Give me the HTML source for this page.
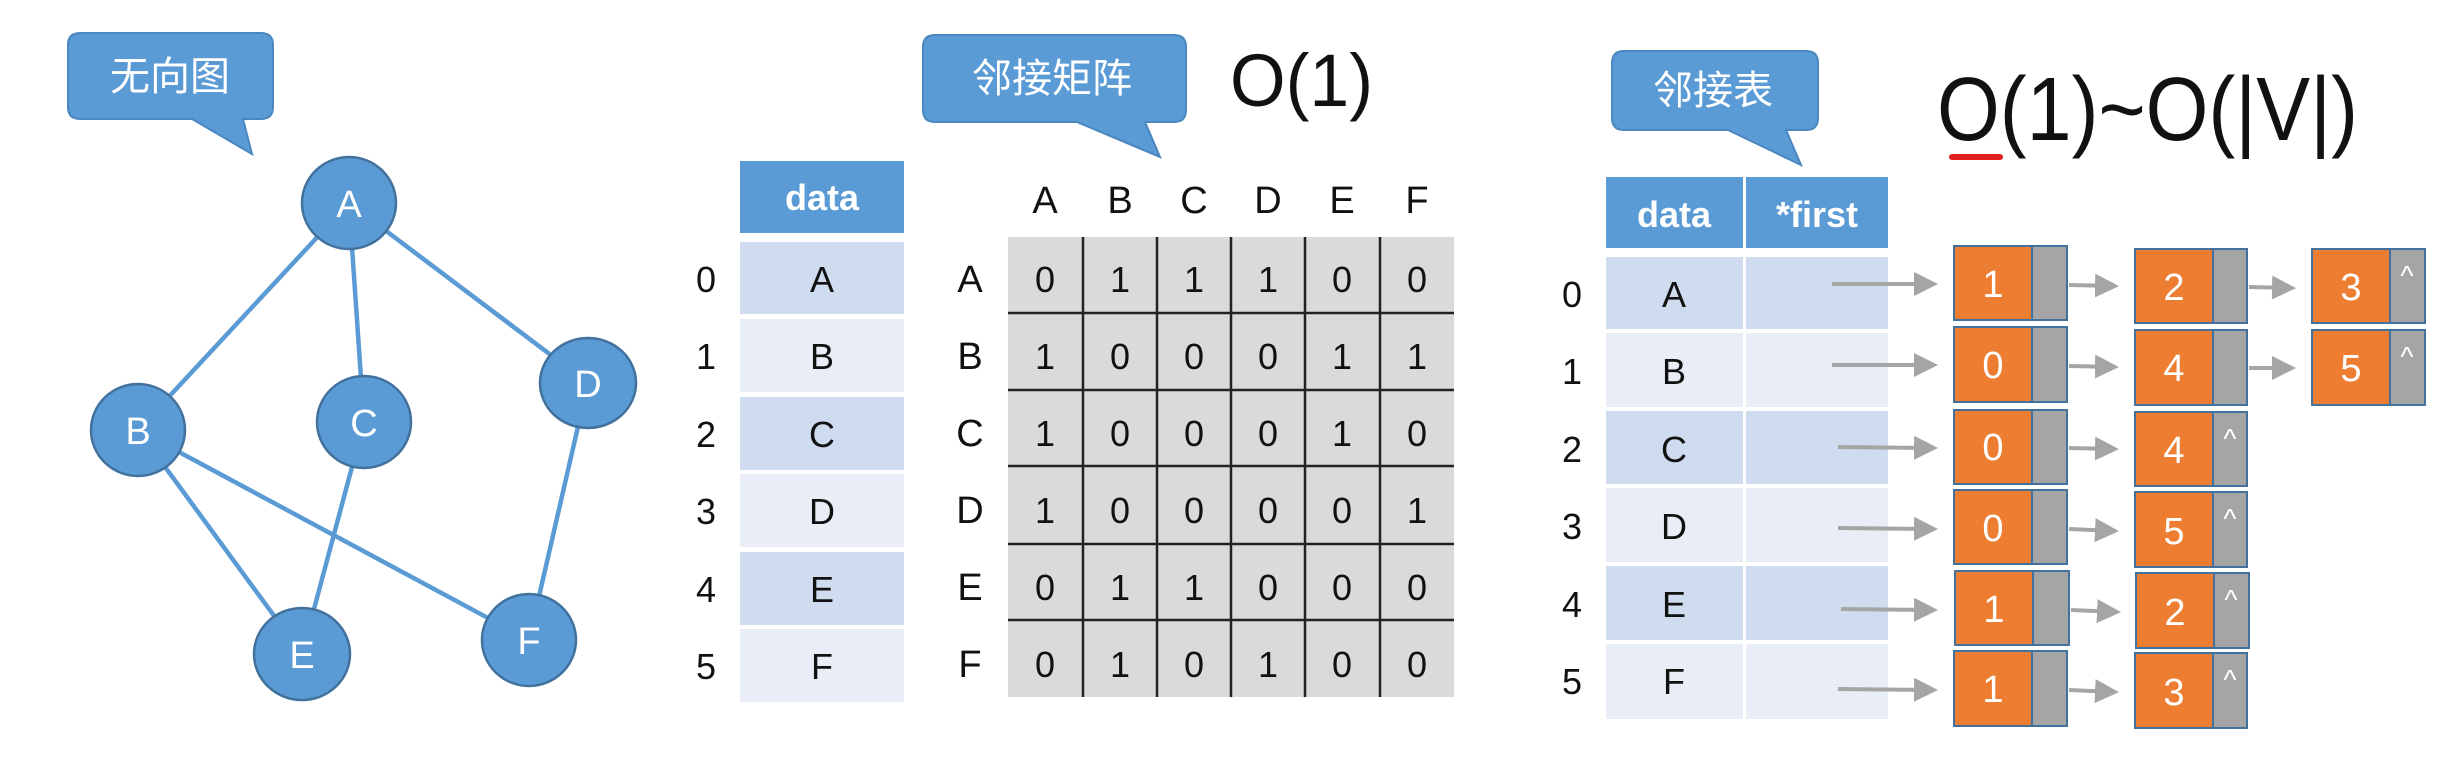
<!DOCTYPE html>
<html><head><meta charset="utf-8"><style>
html,body{margin:0;padding:0;background:#fff;}
svg{display:block;}
text{font-family:"Liberation Sans","Noto Sans CJK SC",sans-serif;}
</style></head><body>
<svg width="2452" height="772" viewBox="0 0 2452 772" xmlns="http://www.w3.org/2000/svg">
<defs>
<marker id="ah" markerWidth="6" markerHeight="6" refX="5" refY="3" orient="auto" markerUnits="strokeWidth"><path d="M0,0 L6,3 L0,6 z" fill="#a5a5a5"/></marker>
</defs>
<path d="M80,33 H261 Q273,33 273,45 V107 Q273,119 261,119 H243 L252,154 L192,119 H80 Q68,119 68,107 V45 Q68,33 80,33 Z" fill="#5b9bd5" stroke="#4a86c0" stroke-width="2"/>
<text x="170" y="90" font-size="40" fill="#fff" text-anchor="middle">无向图</text>
<g stroke="#5b9bd5" stroke-width="4.5">
<line x1="349" y1="203" x2="138" y2="430"/>
<line x1="349" y1="203" x2="364" y2="422"/>
<line x1="349" y1="203" x2="588" y2="383"/>
<line x1="138" y1="430" x2="302" y2="654"/>
<line x1="138" y1="430" x2="529" y2="640"/>
<line x1="364" y1="422" x2="302" y2="654"/>
<line x1="588" y1="383" x2="529" y2="640"/>
</g>
<g fill="#5b9bd5" stroke="#41719c" stroke-width="2.5">
<ellipse cx="349" cy="203" rx="47" ry="46"/>
<ellipse cx="138" cy="430" rx="47" ry="46"/>
<ellipse cx="364" cy="422" rx="47" ry="46"/>
<ellipse cx="588" cy="383" rx="48" ry="45"/>
<ellipse cx="302" cy="654" rx="48" ry="46"/>
<ellipse cx="529" cy="640" rx="47" ry="46"/>
</g>
<g fill="#fff" font-size="38" text-anchor="middle">
<text x="349" y="217">A</text><text x="138" y="444">B</text><text x="364" y="436">C</text>
<text x="588" y="397">D</text><text x="302" y="668">E</text><text x="529" y="654">F</text>
</g>
<path d="M935,35 H1174 Q1186,35 1186,47 V110 Q1186,122 1174,122 H1145 L1160,157 L1077,122 H935 Q923,122 923,110 V47 Q923,35 935,35 Z" fill="#5b9bd5" stroke="#4a86c0" stroke-width="2"/>
<text x="1052" y="92" font-size="40" fill="#fff" text-anchor="middle">邻接矩阵</text>
<text x="1230" y="106" font-size="74" fill="#111" textLength="143" lengthAdjust="spacingAndGlyphs">O(1)</text>
<rect x="740" y="161" width="164" height="72" fill="#5b9bd5"/>
<text x="822" y="210" font-size="36" font-weight="bold" fill="#fff" text-anchor="middle">data</text>
<g>
<rect x="740" y="242" width="164" height="72" fill="#cfdbee"/>
<rect x="740" y="319" width="164" height="73" fill="#e9edf6"/>
<rect x="740" y="397" width="164" height="73" fill="#cfdbee"/>
<rect x="740" y="474" width="164" height="73" fill="#e9edf6"/>
<rect x="740" y="552" width="164" height="73" fill="#cfdbee"/>
<rect x="740" y="629" width="164" height="73" fill="#e9edf6"/>
</g>
<g font-size="36" fill="#111" text-anchor="middle">
<text x="706" y="292">0</text><text x="822" y="292">A</text>
<text x="706" y="369">1</text><text x="822" y="369">B</text>
<text x="706" y="447">2</text><text x="822" y="447">C</text>
<text x="706" y="524">3</text><text x="822" y="524">D</text>
<text x="706" y="602">4</text><text x="822" y="602">E</text>
<text x="706" y="679">5</text><text x="822" y="679">F</text>
</g>
<rect x="1008" y="237" width="446" height="460" fill="#dadada"/>
<g stroke="#222" stroke-width="2.5">
<line x1="1083" y1="237" x2="1083" y2="697"/><line x1="1157" y1="237" x2="1157" y2="697"/>
<line x1="1231" y1="237" x2="1231" y2="697"/><line x1="1305" y1="237" x2="1305" y2="697"/>
<line x1="1380" y1="237" x2="1380" y2="697"/>
<line x1="1008" y1="313" x2="1454" y2="313"/><line x1="1008" y1="390" x2="1454" y2="390"/>
<line x1="1008" y1="466" x2="1454" y2="466"/><line x1="1008" y1="544" x2="1454" y2="544"/>
<line x1="1008" y1="620" x2="1454" y2="620"/>
</g>
<g font-size="38" fill="#111" text-anchor="middle">
<text x="1045" y="213">A</text><text x="1120" y="213">B</text><text x="1194" y="213">C</text><text x="1268" y="213">D</text><text x="1342" y="213">E</text><text x="1417" y="213">F</text>
<text x="970" y="292">A</text><text x="970" y="369">B</text><text x="970" y="446">C</text><text x="970" y="523">D</text><text x="970" y="600">E</text><text x="970" y="677">F</text>
</g>
<g font-size="36" fill="#111" text-anchor="middle">
<text y="292"><tspan x="1045">0</tspan><tspan x="1120">1</tspan><tspan x="1194">1</tspan><tspan x="1268">1</tspan><tspan x="1342">0</tspan><tspan x="1417">0</tspan></text>
<text y="369"><tspan x="1045">1</tspan><tspan x="1120">0</tspan><tspan x="1194">0</tspan><tspan x="1268">0</tspan><tspan x="1342">1</tspan><tspan x="1417">1</tspan></text>
<text y="446"><tspan x="1045">1</tspan><tspan x="1120">0</tspan><tspan x="1194">0</tspan><tspan x="1268">0</tspan><tspan x="1342">1</tspan><tspan x="1417">0</tspan></text>
<text y="523"><tspan x="1045">1</tspan><tspan x="1120">0</tspan><tspan x="1194">0</tspan><tspan x="1268">0</tspan><tspan x="1342">0</tspan><tspan x="1417">1</tspan></text>
<text y="600"><tspan x="1045">0</tspan><tspan x="1120">1</tspan><tspan x="1194">1</tspan><tspan x="1268">0</tspan><tspan x="1342">0</tspan><tspan x="1417">0</tspan></text>
<text y="677"><tspan x="1045">0</tspan><tspan x="1120">1</tspan><tspan x="1194">0</tspan><tspan x="1268">1</tspan><tspan x="1342">0</tspan><tspan x="1417">0</tspan></text>
</g>
<path d="M1624,51 H1806 Q1818,51 1818,63 V118 Q1818,130 1806,130 H1786 L1801,165 L1728,130 H1624 Q1612,130 1612,118 V63 Q1612,51 1624,51 Z" fill="#5b9bd5" stroke="#4a86c0" stroke-width="2"/>
<text x="1713" y="104" font-size="40" fill="#fff" text-anchor="middle">邻接表</text>
<text x="1937" y="140" font-size="90" fill="#111" textLength="421" lengthAdjust="spacingAndGlyphs">O(1)~O(|V|)</text>
<path d="M1952,157 H2000" stroke="#e02020" stroke-width="6" stroke-linecap="round"/>
<rect x="1606" y="177" width="137" height="71" fill="#5b9bd5"/>
<rect x="1746" y="177" width="142" height="71" fill="#5b9bd5"/>
<text x="1674" y="227" font-size="36" font-weight="bold" fill="#fff" text-anchor="middle">data</text>
<text x="1817" y="227" font-size="36" font-weight="bold" fill="#fff" text-anchor="middle">*first</text>
<g>
<rect x="1606" y="257" width="137" height="72" fill="#cfdbee"/><rect x="1746" y="257" width="142" height="72" fill="#cfdbee"/>
<rect x="1606" y="333" width="137" height="74" fill="#e9edf6"/><rect x="1746" y="333" width="142" height="74" fill="#e9edf6"/>
<rect x="1606" y="411" width="137" height="73" fill="#cfdbee"/><rect x="1746" y="411" width="142" height="73" fill="#cfdbee"/>
<rect x="1606" y="488" width="137" height="74" fill="#e9edf6"/><rect x="1746" y="488" width="142" height="74" fill="#e9edf6"/>
<rect x="1606" y="566" width="137" height="74" fill="#cfdbee"/><rect x="1746" y="566" width="142" height="74" fill="#cfdbee"/>
<rect x="1606" y="644" width="137" height="75" fill="#e9edf6"/><rect x="1746" y="644" width="142" height="75" fill="#e9edf6"/>
</g>
<g font-size="36" fill="#111" text-anchor="middle">
<text x="1572" y="307">0</text><text x="1674" y="307">A</text>
<text x="1572" y="384">1</text><text x="1674" y="384">B</text>
<text x="1572" y="462">2</text><text x="1674" y="462">C</text>
<text x="1572" y="539">3</text><text x="1674" y="539">D</text>
<text x="1572" y="617">4</text><text x="1674" y="617">E</text>
<text x="1572" y="694">5</text><text x="1674" y="694">F</text>
</g>
<g stroke="#a5a5a5" stroke-width="4" marker-end="url(#ah)" fill="none">
<line x1="1832" y1="284" x2="1934" y2="284"/><line x1="2069" y1="285" x2="2115" y2="286"/><line x1="2249" y1="287" x2="2292" y2="288"/>
<line x1="1832" y1="365" x2="1934" y2="365"/><line x1="2069" y1="366" x2="2115" y2="367"/><line x1="2249" y1="368" x2="2292" y2="368"/>
<line x1="1838" y1="447" x2="1934" y2="448"/><line x1="2069" y1="448" x2="2115" y2="449"/>
<line x1="1838" y1="528" x2="1934" y2="529"/><line x1="2069" y1="529" x2="2115" y2="531"/>
<line x1="1841" y1="609" x2="1934" y2="610"/><line x1="2071" y1="610" x2="2117" y2="612"/>
<line x1="1838" y1="689" x2="1934" y2="690"/><line x1="2069" y1="690" x2="2115" y2="692"/>
</g>
<g stroke="#41719c" stroke-width="2">
<rect x="1954" y="246" width="78" height="74" fill="#ed7d31"/><rect x="2032" y="246" width="35" height="74" fill="#a5a5a5"/>
<rect x="2135" y="249" width="78" height="74" fill="#ed7d31"/><rect x="2213" y="249" width="34" height="74" fill="#a5a5a5"/>
<rect x="2312" y="249" width="78" height="74" fill="#ed7d31"/><rect x="2390" y="249" width="35" height="74" fill="#a5a5a5"/>
<rect x="1954" y="327" width="78" height="75" fill="#ed7d31"/><rect x="2032" y="327" width="35" height="75" fill="#a5a5a5"/>
<rect x="2135" y="330" width="78" height="75" fill="#ed7d31"/><rect x="2213" y="330" width="34" height="75" fill="#a5a5a5"/>
<rect x="2312" y="330" width="78" height="75" fill="#ed7d31"/><rect x="2390" y="330" width="35" height="75" fill="#a5a5a5"/>
<rect x="1954" y="410" width="78" height="74" fill="#ed7d31"/><rect x="2032" y="410" width="35" height="74" fill="#a5a5a5"/>
<rect x="2135" y="412" width="78" height="74" fill="#ed7d31"/><rect x="2213" y="412" width="34" height="74" fill="#a5a5a5"/>
<rect x="1954" y="490" width="78" height="74" fill="#ed7d31"/><rect x="2032" y="490" width="35" height="74" fill="#a5a5a5"/>
<rect x="2135" y="492" width="78" height="75" fill="#ed7d31"/><rect x="2213" y="492" width="34" height="75" fill="#a5a5a5"/>
<rect x="1955" y="571" width="78" height="74" fill="#ed7d31"/><rect x="2033" y="571" width="36" height="74" fill="#a5a5a5"/>
<rect x="2136" y="573" width="78" height="75" fill="#ed7d31"/><rect x="2214" y="573" width="35" height="75" fill="#a5a5a5"/>
<rect x="1954" y="651" width="78" height="75" fill="#ed7d31"/><rect x="2032" y="651" width="35" height="75" fill="#a5a5a5"/>
<rect x="2135" y="653" width="78" height="75" fill="#ed7d31"/><rect x="2213" y="653" width="34" height="75" fill="#a5a5a5"/>
</g>
<g font-size="38" fill="#fff" text-anchor="middle">
<text x="1993" y="297">1</text><text x="2174" y="300">2</text><text x="2351" y="300">3</text>
<text x="1993" y="378">0</text><text x="2174" y="381">4</text><text x="2351" y="381">5</text>
<text x="1993" y="460">0</text><text x="2174" y="463">4</text>
<text x="1993" y="541">0</text><text x="2174" y="544">5</text>
<text x="1994" y="622">1</text><text x="2175" y="625">2</text>
<text x="1993" y="702">1</text><text x="2174" y="705">3</text>
</g>
<g font-size="28" fill="#fff" text-anchor="middle">
<text x="2407" y="285">^</text><text x="2407" y="366">^</text>
<text x="2230" y="448">^</text><text x="2230" y="528">^</text><text x="2231" y="609">^</text><text x="2230" y="689">^</text>
</g>
</svg>
</body></html>
